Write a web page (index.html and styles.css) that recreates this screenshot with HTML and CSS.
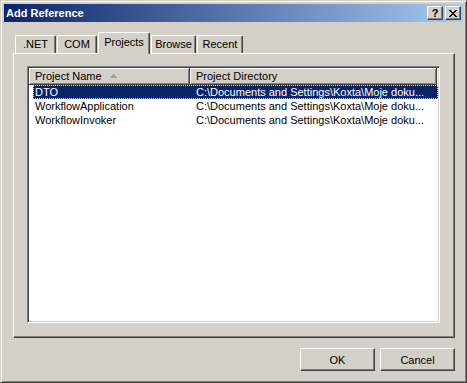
FILE: index.html
```html
<!DOCTYPE html>
<html lang="en">
<head>
    <meta charset="UTF-8">
    <title>Add Reference</title>
    <link rel="stylesheet" href="styles.css">
</head>
<body>
    <div class="window">
        <div class="titlebar">
            <span class="title">Add Reference</span>
            <div class="caption-buttons">
                <button class="cap-btn help">?</button>
                <button class="cap-btn close">
                    <svg width="8" height="7" viewBox="0 0 8 7" shape-rendering="crispEdges">
                        <path d="M0 0h2v1h-2z M6 0h2v1h-2z M1 1h2v1h-2z M5 1h2v1h-2z M2 2h4v1h-4z M3 3h2v1h-2z M2 4h4v1h-4z M1 5h2v1h-2z M5 5h2v1h-2z M0 6h2v1h-2z M6 6h2v1h-2z" fill="#000"/>
                    </svg>
                </button>
            </div>
        </div>

        <div class="client">
            <ul class="tabs">
                <li class="tab tab-net">.NET</li>
                <li class="tab tab-com">COM</li>
                <li class="tab tab-projects active">Projects</li>
                <li class="tab tab-browse">Browse</li>
                <li class="tab tab-recent">Recent</li>
            </ul>

            <div class="tab-panel">
                <div class="listview">
                    <div class="lv-header">
                        <div class="lv-col col-name">
                            Project Name
                            <svg class="sort-arrow" width="7" height="4" viewBox="0 0 7 4" shape-rendering="crispEdges">
                                <path d="M3 0h1v1h-1z M2 1h3v1h-3z M1 2h5v1h-5z M0 3h7v1h-7z" fill="#a0a0a0"/>
                            </svg>
                        </div>
                        <div class="lv-col col-dir">Project Directory</div>
                    </div>
                    <div class="lv-row selected">
                        <span class="cell col-name">DTO</span>
                        <span class="cell col-dir">C:\Documents and Settings\Koxta\Moje doku...</span>
                    </div>
                    <div class="lv-row">
                        <span class="cell col-name">WorkflowApplication</span>
                        <span class="cell col-dir">C:\Documents and Settings\Koxta\Moje doku...</span>
                    </div>
                    <div class="lv-row">
                        <span class="cell col-name">WorkflowInvoker</span>
                        <span class="cell col-dir">C:\Documents and Settings\Koxta\Moje doku...</span>
                    </div>
                </div>
            </div>

            <div class="buttons">
                <button class="btn">OK</button>
                <button class="btn">Cancel</button>
            </div>
        </div>
    </div>
</body>
</html>
```

FILE: styles.css
```css
/* Base */
* {
    margin: 0;
    padding: 0;
    box-sizing: border-box;
}

body {
    background: #d4d0c8;
    font-family: 'Liberation Sans', Arial, sans-serif;
    font-size: 11px;
    color: #000;
}

/* Window frame */
.window {
    width: 467px;
    height: 383px;
    display: flex;
    flex-direction: column;
    background: #d4d0c8;
    border: 1px solid;
    border-color: #d4d0c8 #404040 #404040 #d4d0c8;
    box-shadow: inset 1px 1px #fff, inset -1px -1px #808080;
    padding: 3px;
}

/* Title bar */
.titlebar {
    height: 18px;
    display: flex;
    align-items: center;
    justify-content: space-between;
    padding: 0 2px;
    background: linear-gradient(to right, #0a246a, #a6caf0);
}

.title {
    color: #fff;
    font-weight: bold;
    font-size: 11px;
}

.caption-buttons {
    display: flex;
    gap: 2px;
}

.cap-btn {
    width: 16px;
    height: 14px;
    display: flex;
    align-items: center;
    justify-content: center;
    background: #d4d0c8;
    border: 1px solid;
    border-color: #fff #404040 #404040 #fff;
    box-shadow: inset -1px -1px #808080;
    font-family: 'Liberation Sans', Arial, sans-serif;
    font-weight: bold;
    font-size: 11px;
    line-height: 1;
    color: #000;
}

/* Client area */
.client {
    flex: 1;
    display: flex;
    flex-direction: column;
    padding: 10px 8px 8px 9px;
}

/* Tabs */
.tabs {
    list-style: none;
    display: flex;
    align-items: flex-end;
    gap: 1px;
    height: 21px;
    padding-left: 2px;
}

.tab {
    height: 18px;
    line-height: 16px;
    text-align: center;
    background: #d4d0c8;
    border-top: 1px solid #fff;
    border-left: 1px solid #fff;
    border-right: 1px solid #404040;
    box-shadow: inset -1px 0 #808080;
    border-radius: 2px 2px 0 0;
    white-space: nowrap;
}

.tab-net { width: 41px; }
.tab-com { width: 40px; }
.tab-projects { width: 52px; }
.tab-browse { width: 45px; }
.tab-recent { width: 46px; }

.tab.active {
    position: relative;
    z-index: 1;
    height: 22px;
    line-height: 18px;
    margin-bottom: -1px;
}

/* Tab page */
.tab-panel {
    flex: 1;
    display: flex;
    border: 1px solid;
    border-color: #fff #404040 #404040 #fff;
    box-shadow: inset -1px -1px #808080;
    padding: 12px 14px 14px 13px;
}

/* List view */
.listview {
    flex: 1;
    background: #fff;
    border: 1px solid;
    border-color: #808080 #fff #fff #808080;
    box-shadow: inset 1px 1px #404040, inset -1px -1px #d4d0c8;
    padding: 1px;
}

.lv-header {
    display: flex;
    height: 17px;
}

.lv-col {
    display: flex;
    align-items: center;
    height: 17px;
    padding-left: 6px;
    background: #d4d0c8;
    border-right: 1px solid #404040;
    border-bottom: 1px solid #404040;
    box-shadow: inset 1px 1px #fff, inset -1px -1px #808080;
    white-space: nowrap;
}

.lv-col.col-name {
    width: 161px;
}

.lv-col.col-dir {
    width: 247px;
}

.sort-arrow {
    margin-left: 8px;
}

.lv-row {
    display: flex;
    height: 14px;
    line-height: 14px;
    white-space: nowrap;
}

.cell.col-name {
    width: 161px;
    padding-left: 6px;
}

.cell.col-dir {
    padding-left: 6px;
}

.lv-row.selected {
    margin-left: 4px;
    background: #0a246a;
    color: #fff;
    outline: 1px dotted #f5db95;
    outline-offset: -1px;
}

.lv-row.selected .col-name {
    width: 157px;
    padding-left: 2px;
}

/* Dialog buttons */
.buttons {
    display: flex;
    justify-content: flex-end;
    gap: 5px;
    margin-top: 10px;
}

.btn {
    width: 75px;
    height: 23px;
    background: #d4d0c8;
    border: 1px solid;
    border-color: #fff #404040 #404040 #fff;
    box-shadow: inset -1px -1px #808080;
    font-family: 'Liberation Sans', Arial, sans-serif;
    font-size: 11px;
    color: #000;
}
```
